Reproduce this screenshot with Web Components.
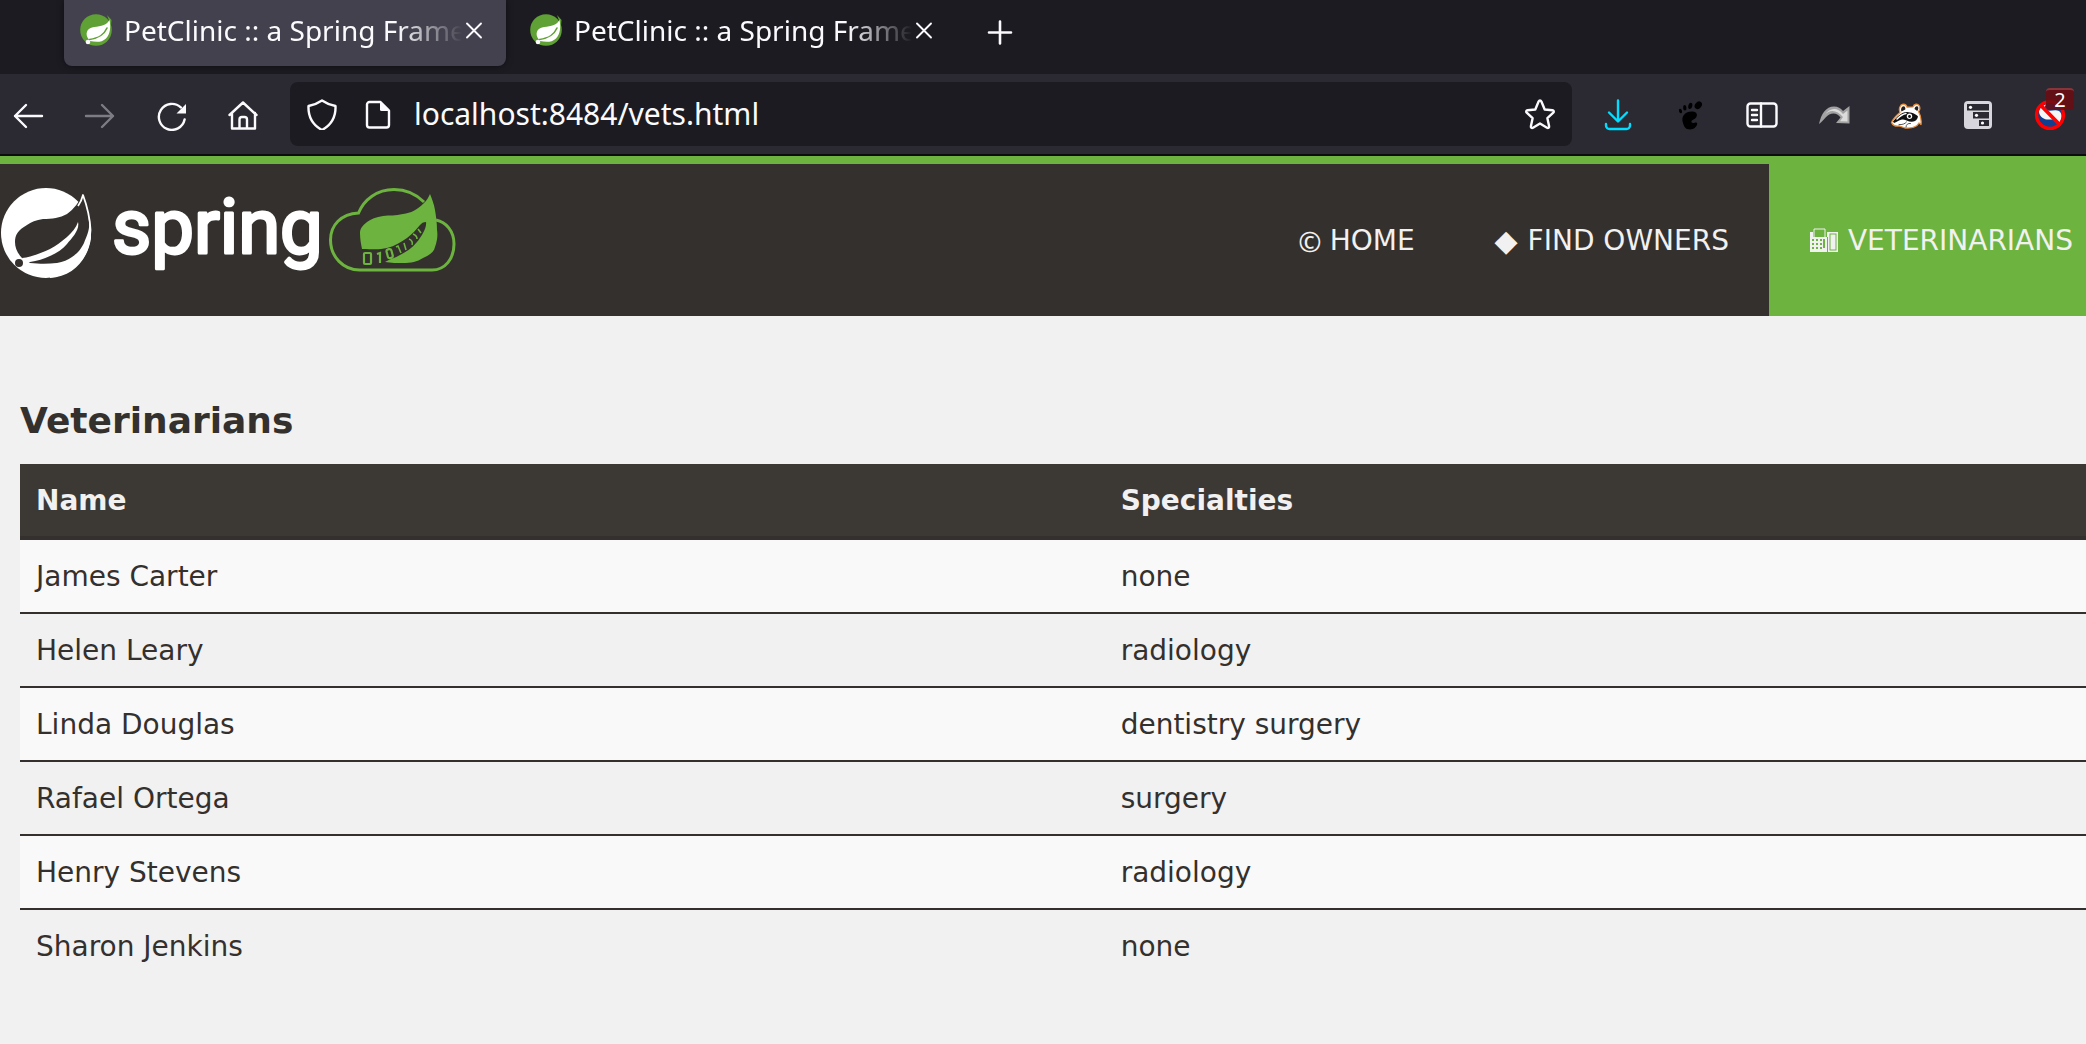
<!DOCTYPE html>
<html lang="en">
<head>
<meta charset="utf-8">
<title>PetClinic :: a Spring Framework demonstration</title>
<style>
  html, body { margin: 0; min-height: 100%; background: #f1f1f1; }
  body { overflow-x: hidden; }
</style>
</head>
<body>
<browser-chrome></browser-chrome>
<clinic-header></clinic-header>
<vet-list></vet-list>

<script>
const svg = (body, size = 32, box = '0 0 32 32') =>
  `<svg width="${size}" height="${size}" viewBox="${box}" fill="none" stroke="currentColor" stroke-width="2.4" stroke-linecap="round" stroke-linejoin="round" aria-hidden="true">${body}</svg>`;

const ICONS = {
  back: '<path d="M30 17H3M14 6 3 17l11 11"/>',
  forward: '<path d="M2 17h27M18 6l11 11-11 11"/>',
  reload: '<path d="M28.6 20.5A13 13 0 1 1 24.8 8.4"/><path d="M30 5v9.500h-9.500z" fill="currentColor" stroke="none"/>',
  home: '<path d="M1.500 16 15 3.500 28.500 16M4 14v15.500h23V14M11.500 29v-8.500a2.500 2.500 0 0 1 2.500-2.500h2.500a2.500 2.500 0 0 1 2.500 2.500V29"/>',
  shield: '<path d="M16 2.500c4 2.800 8.500 4.500 13.500 5.500.4 9.500-3.500 18.500-13.500 24C6 26.500 2.100 17.500 2.500 8 7.500 7 12 5.300 16 2.500z"/>',
  page: '<path d="M7.500 4h11L27 12.500V27a2.500 2.500 0 0 1-2.500 2.500h-17A2.500 2.500 0 0 1 5 27V6.500A2.500 2.500 0 0 1 7.500 4z"/><path d="M18 3v8.500a1.500 1.500 0 0 0 1.500 1.500H28z" fill="currentColor" stroke="none"/>',
  star: '<path d="M16 2.500c.6 0 1.100.4 1.400 1l3.300 8 7.700.7c1.400.1 1.900 1.500.9 2.500l-5.900 5.500 1.700 8c.3 1.400-.9 2.200-2.100 1.500L16 25.500l-7 4.200c-1.200.7-2.400-.1-2.100-1.500l1.700-8-5.900-5.500c-1-1-.5-2.400.9-2.500l7.700-.7 3.300-8c.3-.6.8-1 1.400-1z"/>',
  download: '<path d="M16 1.500V22M7 13.500l9 9 9-9M4 25v1.500A3.500 3.500 0 0 0 7.500 30h17a3.500 3.500 0 0 0 3.500-3.500V25"/>',
  foot: '<g fill="#000" stroke="none"><ellipse cx="24.300" cy="6.300" rx="3.200" ry="4.200" transform="rotate(38 24.300 6.300)"/><ellipse cx="16.300" cy="6.900" rx="2" ry="3.200" transform="rotate(12 16.300 6.900)"/><ellipse cx="10.800" cy="8.800" rx="1.700" ry="2.800" transform="rotate(-4 10.800 8.800)"/><ellipse cx="6.500" cy="12" rx="1.500" ry="2.300" transform="rotate(-18 6.500 12)"/><path d="M18.500 12.500c4.500.3 5.300 3.500 3.600 6-1.500 2.200-4 2-4.600 3.600-.6 1.800 1.400 2.500 3.300 1.600 1.400-.6 2.700-.2 2.400 1.300C22.700 27.500 20 30.500 16 30.500c-5 0-6.200-3.500-7.300-7.500-1.200-4.300.8-10.700 9.800-10.500z"/></g>',
  sidebar: '<rect x="1.500" y="4.500" width="29" height="23" rx="3"/><path d="M15 4.500v23M6 11h5M6 16h5M6 21h5"/>',
  jump: '<path d="M1 25C3 15 8 7.500 16 7.500c4 0 6.500 1.500 9 4.500L31.500 7v17.500L18 24l4.500-5.500c-2-2.700-4.200-4-7-4C9 14.500 6.500 21 1 25z" fill="#a2a2a2" stroke="none"/><path d="M7 16c4.500-7.500 12.500-8 18-1l4.500-3.500v11l-7.500-.3 3-4.200C19 10.500 11 10 7 16z" fill="#dcdcdc" stroke="none"/>',
  badger: '<path d="M1.500 23.500c2-4.500 5.500-7.500 8.500-10C8.500 10 10 5.500 13 5.200c2.500-.2 3.700 1.600 4 3l6-.3C24 5 27.500 4.200 29 6.500c1.600 2.400.5 4.800-.5 6 2.500 4.500 3 9 2.500 13l-2-1.500c-2.500 4.500-8 5.500-14 5L9 26.800c-3 .8-6.500-.3-7.500-3.300z" fill="#fff" stroke="#e98c3a" stroke-width="1.300"/><path d="M3 22.500c4-5 9-9.700 14-9.500 4 .2 9 1.800 11 4.500-.5 3-2.500 5-6 5.300-4 .3-6-3-10-2.300-3.500.5-5.500 3-8 3.500z" fill="#111" stroke="none"/><path d="M11.500 12.500c-1-2.500.2-5.300 2-5.300s2 2 1.800 3.300zM24.500 10c.3-2.300 2-3.500 3.200-2.500s.6 3.300-.5 4.500z" fill="#222" stroke="none"/><path d="M7 20c3-3 6-5 9-5.500" stroke="#fff" stroke-width="1.500"/><circle cx="19.500" cy="17.300" r="2.700" fill="#fff" stroke="none"/><circle cx="19.500" cy="17.500" r="1.400" fill="#111" stroke="none"/><path d="M16 28c0-2.500 2-4 4.500-3.500M9 25.500c3 .5 6-.5 7.500-2.500" stroke="#555" stroke-width="1"/>',
  cards: '<rect x="2" y="2" width="28" height="28" rx="4" fill="#d7d6dc" stroke="none"/><path d="M5 5h22v6.500H5zM11 13h16v6.500H11zM17 21h10v6H17z" fill="#2b2a33" stroke="none"/><g fill="#fff" stroke="none"><circle cx="8.500" cy="8.300" r="1.600"/><circle cx="14.500" cy="16.300" r="1.600"/><circle cx="20.500" cy="24" r="1.600"/></g>',
  blocked: '<circle cx="16" cy="16" r="12" fill="#0f3f8e" stroke="none"/><path d="M5 13c1 6 6 8 11 7.500 5-.5 8 1 9 4C29 19 28 14 25 12c-5-2-9 1.500-13-1.500-2-1.500-1-4 0-5C8 6.500 5 10 5 13z" fill="#f5f5f5" stroke="none"/><circle cx="16" cy="16" r="13.400" stroke="#f00" stroke-width="3.400"/><path d="m7 6.500 18.500 19" stroke="#f00" stroke-width="3.800"/>',
  close: '<path d="m9 9.500 14 14m0-14-14 14" stroke-width="1.900"/>',
  plus: '<path d="M16 4.500v22M5 15.500h22" stroke-width="2.600"/>',
  leaf: '<circle cx="16" cy="16" r="15.800" fill="#5fa134" stroke="none"/><path d="M27 1 31.500 6 31 12z" fill="#5fa134" stroke="none"/><path d="M29.500 6c1.500 7 .8 14-3.500 18.500-4.500 4.500-11 3.500-16 2.500L8.500 25C5 20.500 6.500 15 12 13.500c6-1.500 13.500-.5 17.500-7.500z" fill="#fff" stroke="none"/><path d="M27 14c-3 7-8 10-17.500 11.500" stroke="#5fa134" stroke-width="1.600"/><circle cx="8" cy="28" r="2.300" fill="#fff" stroke="none"/>'
};

const define = (name, html, extra = {}) => {
  const template = document.createElement('template');
  template.innerHTML = html;
  customElements.define(name, class extends HTMLElement {
    connectedCallback() {
      if (this.shadowRoot) return;
      this.attachShadow({ mode: 'open' }).append(template.content.cloneNode(true));
      if (extra.ready) extra.ready.call(this);
    }
  });
};

define('ui-icon', `<style>:host{display:block;flex:none;line-height:0}</style><span></span>`, {
  ready() { this.shadowRoot.querySelector('span').innerHTML = svg(ICONS[this.getAttribute('name')]); }
});

define('tool-button', `
<style>
  :host { display: block; flex: none; position: relative; color: #fbfbfe; }
  button { all: unset; display: flex; align-items: center; justify-content: center; box-sizing: border-box;
    width: 56px; height: 64px; padding-top: 2px; }
  :host([dim]) { color: #7d7c84; }
  :host([accent]) { color: #00ddff; }
  ::slotted(*) {
    position: absolute; top: 6px; right: 4px; box-sizing: border-box; width: 28px; height: 22px;
    border-top: 2px solid #86353a; border-radius: 4px; background: #6b0c11dd;
    color: #fff; font: 20px/19px "Noto Sans", sans-serif; text-align: center;
  }
</style>
<button><div></div></button><slot></slot>`, {
  ready() {
    const button = this.shadowRoot.querySelector('button');
    button.setAttribute('aria-label', this.getAttribute('label'));
    button.firstElementChild.innerHTML = svg(ICONS[this.getAttribute('icon')]);
    button.firstElementChild.style.lineHeight = 0;
  }
});

define('browser-tab', `
<style>
  :host { display: flex; align-items: center; gap: 12px; box-sizing: border-box; width: 442px; height: 66px;
    padding: 0 16px 6px; border-radius: 0 0 8px 8px; color: #fbfbfe; font: 28px/40px "Noto Sans", sans-serif; }
  :host([selected]) { background: #42414d; box-shadow: 0 0 6px #0008; }
  .title { flex: 1; min-width: 0; overflow: hidden; white-space: nowrap;
    -webkit-mask-image: linear-gradient(to left, transparent, #000 64px); mask-image: linear-gradient(to left, transparent, #000 64px); }
  button { all: unset; display: flex; margin-left: -16px; }
</style>
<ui-icon name="leaf"></ui-icon>
<span class="title"><slot></slot></span>
<button aria-label="Close tab"><ui-icon name="close"></ui-icon></button>`);

define('address-bar', `
<style>
  :host { display: flex; flex: 1; align-items: center; gap: 20px; height: 64px; box-sizing: border-box; margin: 0 2px;
    padding: 0 16px; border-radius: 8px; background: #1c1b22; color: #fbfbfe; }
  .state { display: flex; gap: 24px; }
  input { all: unset; flex: 1; min-width: 0; font: 30px/40px "Noto Sans", sans-serif; }
</style>
<div class="state"><ui-icon name="shield"></ui-icon><ui-icon name="page"></ui-icon></div>
<input type="text" aria-label="Address" value="localhost:8484/vets.html">
<ui-icon name="star"></ui-icon>`);

define('browser-chrome', `
<style>
  :host { display: block; background: #2b2a33; border-bottom: 2px solid #0c0c0d; }
  .tabs { display: flex; gap: 8px; height: 74px; padding-left: 64px; background: #1c1b22; }
  .tools { display: flex; align-items: center; gap: 16px; padding: 8px 8px 8px 0; }
  .new { margin-left: 8px; }
</style>
<div class="tabs">
  <browser-tab selected>PetClinic :: a Spring Framework</browser-tab>
  <browser-tab>PetClinic :: a Spring Framework</browser-tab>
  <tool-button class="new" icon="plus" label="New tab"></tool-button>
</div>
<div class="tools">
  <tool-button icon="back" label="Back"></tool-button>
  <tool-button icon="forward" label="Forward" dim></tool-button>
  <tool-button icon="reload" label="Reload"></tool-button>
  <tool-button icon="home" label="Home"></tool-button>
  <address-bar></address-bar>
  <tool-button icon="download" label="Downloads" accent></tool-button>
  <tool-button icon="foot" label="GNOME extensions"></tool-button>
  <tool-button icon="sidebar" label="Sidebars"></tool-button>
  <tool-button icon="jump" label="Redirect"></tool-button>
  <tool-button icon="badger" label="Privacy Badger"></tool-button>
  <tool-button icon="cards" label="Tree tabs"></tool-button>
  <tool-button icon="blocked" label="Script blocker"><span>2</span></tool-button>
</div>`);

define('spring-logo', `
<style>:host { display: block; } svg { display: block; overflow: visible; } text { font-family: Roboto, sans-serif; }</style>
<svg width="460" height="92" viewBox="0 0 460 92" role="img" aria-label="spring">
  <circle cx="46" cy="46" r="45" fill="#fff"/>
  <path d="M83 7c-4 8-9 15-16 20-7 4-15 5-24 5-7 1-12 3-16 6-9 5-12 10-12 17 0 5 2 11 7 16l8 5c10 1 18 1 27 0 6-1 11-3 15-6 6-4 9-8 12-14 3-8 6-13 5-22-1-10-3-19-6-27z" fill="#34302d"/>
  <path d="M78 19c3-4 4-7 5-11 4 11 7 23 7.500 35 0 6-1 11-3 16" fill="none" stroke="#fff" stroke-width="1.800" stroke-linejoin="round"/>
  <path d="M90 42c-1 13-6 23-18 29-5 4-12 6-24 6l2 14c22-1 38-18 41-40z" fill="#fff"/>
  <path d="M78 35c-2 6-6 10-11 15-6 5-11 9-17 12-9 4-18 8-28 9l4 6 4-2c7-1 14-3 20-6 7-3 13-7 17-12 5-6 13-14 11-22z" fill="#fff"/>
  <circle cx="19" cy="76" r="4" fill="#34302d"/>
  <text x="112" y="66" font-size="76" fill="#fff" stroke="#fff" stroke-width="3" stroke-linejoin="round">spring</text>
  <path d="M424 15C416 7 406 2.500 394 2.500c-17 0-30 10-35.500 23.500C341 27 330.500 38 330.500 53c0 17 13 30 29 30H432c13 0 22-11 22-26 0-13-8-22-18-24" fill="none" stroke="#6db33f" stroke-width="3"/>
  <path d="M430 7c-2 4-3 6-6 9-7 7-13 10-21 11-8 2-13 1-20 2-7 1-12 3-16 6-5 4-7 7-7 11 0 6 1 11 2 16 10 0 17 1 25-1s14-6 20-10c5-4 9-8 13-13 2-2 3-3 6-3 1 6-5 15-9 20-5 6-11 10-17 13-5 3-10 4-15 7 6 1 12 1 18 1 8 0 14-1 20-5 7-3 11-6 12-11 2-6 3-11 2-17 0-7-1-14-2-20-1-6-3-11-5-16z" fill="#6db33f"/>
  <g fill="none" stroke="#6db33f" stroke-width="2.200">
    <rect x="364" y="66" width="7" height="11" rx="1"/>
    <path d="m377 67 3-1v10"/>
    <rect x="387" y="62" width="5" height="9" rx="2" transform="rotate(-15 390 66)"/>
    <path d="m396 60 2-1 3 7M404 56l2 7M409 52c3 1 4 4 3 6M413 47c3 1 4 3 4 5M418 42l3 4" stroke-width="1.600"/>
  </g>
</svg>`);

define('nav-link', `
<style>
  :host { display: flex; }
  a { display: flex; align-items: center; gap: 8px; padding: 2px 40px 0; color: #f1f1f1; text-decoration: none;
    text-transform: uppercase; white-space: nowrap; font: 28px/40px "DejaVu Sans", sans-serif; }
  :host([active]) a { background: #6db33f; padding-right: 13px; }
  ::slotted([slot=icon]) { min-width: 25px; }
</style>
<a href="#"><slot name="icon"></slot><span><slot></slot></span></a>`);

define('clinic-header', `
<style>
  :host { display: flex; justify-content: space-between; height: 152px; border-top: 8px solid #6db33f; background: #34302d; }
  spring-logo { padding-top: 23px; }
  nav { display: flex; }
  .copy { font-family: "Noto Sans", sans-serif; text-align: right; }
  .diamond { font-size: 30px; }
  svg { display: block; }
</style>
<spring-logo></spring-logo>
<nav aria-label="Main">
  <nav-link><span slot="icon" class="copy">©</span>Home</nav-link>
  <nav-link><span slot="icon" class="diamond">◆</span>Find owners</nav-link>
  <nav-link active><svg slot="icon" width="31" height="26" viewBox="0 0 31 26" aria-hidden="true">
    <path d="M5 9V1h11v8" fill="none" stroke="#f1f1f1" stroke-width="1"/>
    <path d="M1 4h3v5h14V4h11v20H1z" fill="#f1f1f1"/>
    <path d="M3 11h2v2H3zM7 11h2v2H7zM11 11h2v2h-2zM3 15h2v2H3zM7 15h2v2H7zM11 15h2v2h-2zM3 19h2v2H3zM7 19h2v2H7zM11 19h2v2h-2zM14 11h2v9h-2zM18 9h1v15h-1z" fill="#6db33f"/>
    <rect x="21" y="6" width="6" height="16" fill="none" stroke="#6db33f"/>
  </svg>Veterinarians</nav-link>
</nav>`);

define('vet-list', `
<style>
  :host { display: block; padding: 85px 0 0 20px; color: #34302d; font: 28px/40px "DejaVu Sans", sans-serif; }
  h2 { margin: 0 0 23px; font-size: 36px; line-height: 40px; }
  table { width: 100%; border-collapse: separate; border-spacing: 0; table-layout: fixed; }
  th, td { box-sizing: border-box; padding: 17px 16px 15px; text-align: left; }
  th { background: #3c3834; color: #f1f1f1; border-bottom: 4px solid #34302d; }
  th:first-child { width: 52.5%; }
  tbody tr:nth-child(odd) { background: #f9f9f9; }
  tbody tr:not(:last-child) td { border-bottom: 2px solid #34302d; }
</style>
<h2>Veterinarians</h2>
<table>
  <thead><tr><th scope="col">Name</th><th scope="col">Specialties</th></tr></thead>
  <tbody>
    <tr><td>James Carter</td><td>none</td></tr>
    <tr><td>Helen Leary</td><td>radiology</td></tr>
    <tr><td>Linda Douglas</td><td>dentistry surgery</td></tr>
    <tr><td>Rafael Ortega</td><td>surgery</td></tr>
    <tr><td>Henry Stevens</td><td>radiology</td></tr>
    <tr><td>Sharon Jenkins</td><td>none</td></tr>
  </tbody>
</table>`);
</script>
</body>
</html>
